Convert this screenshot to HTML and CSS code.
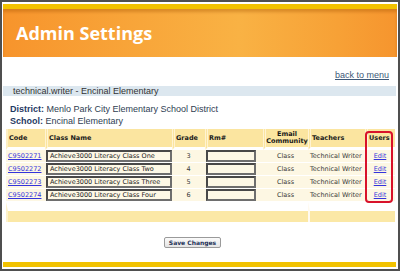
FILE: index.html
```html
<!DOCTYPE html>
<html lang="en">
  <head>
    <meta charset="UTF-8" />
    <title>Admin Settings</title>
    <link rel="stylesheet" href="styles.css">
  </head>
  <body>
    <div class="frame">
      <div class="banner">
        <h1 class="title">Admin Settings</h1>
      </div>

      <div class="toplinks">
        <a href="#" class="back-link">back to menu</a>
      </div>

      <div class="userbar">technical.writer - Encinal Elementary</div>

      <div class="school-info">
        <p><span class="label">District:</span> Menlo Park City Elementary School District</p>
        <p><span class="label">School:</span> Encinal Elementary</p>
      </div>

      <div class="table-wrap">
        <table class="classes">
          <colgroup>
            <col style="width: 39px" />
            <col style="width: 127px" />
            <col style="width: 33px" />
            <col style="width: 58px" />
            <col style="width: 45px" />
            <col style="width: 57px" />
            <col style="width: 30px" />
          </colgroup>
          <thead>
            <tr>
              <th class="first">Code</th>
              <th>Class Name</th>
              <th>Grade</th>
              <th>Rm#</th>
              <th class="center">Email<br />Community</th>
              <th>Teachers</th>
              <th>Users</th>
            </tr>
          </thead>
          <tbody>
            <tr>
              <td><a href="#" class="code-link">C9502271</a></td>
              <td><span class="field">Achieve3000 Literacy Class One</span></td>
              <td class="center">3</td>
              <td><span class="field room"></span></td>
              <td class="center">Class</td>
              <td>Technical Writer</td>
              <td class="center"><a href="#" class="edit-link">Edit</a></td>
            </tr>
            <tr>
              <td><a href="#" class="code-link">C9502272</a></td>
              <td><span class="field">Achieve3000 Literacy Class Two</span></td>
              <td class="center">4</td>
              <td><span class="field room"></span></td>
              <td class="center">Class</td>
              <td>Technical Writer</td>
              <td class="center"><a href="#" class="edit-link">Edit</a></td>
            </tr>
            <tr>
              <td><a href="#" class="code-link">C9502273</a></td>
              <td><span class="field">Achieve3000 Literacy Class Three</span></td>
              <td class="center">5</td>
              <td><span class="field room"></span></td>
              <td class="center">Class</td>
              <td>Technical Writer</td>
              <td class="center"><a href="#" class="edit-link">Edit</a></td>
            </tr>
            <tr>
              <td><a href="#" class="code-link">C9502274</a></td>
              <td><span class="field">Achieve3000 Literacy Class Four</span></td>
              <td class="center">6</td>
              <td><span class="field room"></span></td>
              <td class="center">Class</td>
              <td>Technical Writer</td>
              <td class="center"><a href="#" class="edit-link">Edit</a></td>
            </tr>
          </tbody>
          <tfoot>
            <tr>
              <td colspan="5" class="first"></td>
              <td colspan="2"></td>
            </tr>
          </tfoot>
        </table>
        <div class="callout"></div>
      </div>

      <div class="actions">
        <button class="save-btn">Save Changes</button>
      </div>

      <div class="bottom-bar"></div>
    </div>
  </body>
</html>
```

FILE: styles.css
```css
* {
  margin: 0;
  padding: 0;
  box-sizing: border-box;
}

body {
  font-family: "Liberation Sans", Arial, sans-serif;
  background: #ffffff;
  color: #333333;
}

.frame {
  width: 400px;
  height: 271px;
  border: 2px solid #4f4f4f;
  padding: 2px 1px 2px 1px;
  display: flex;
  flex-direction: column;
  background: #ffffff;
}

/* Orange banner */
.banner {
  height: 53px;
  border-top: 5px solid #f2c200;
  background: linear-gradient(
    90deg,
    #f7942c 0%,
    #f8a63a 35%,
    #f9b244 60%,
    #f7a136 85%,
    #f6952e 100%
  );
  box-shadow: inset 0 3px 3px rgba(160, 80, 0, 0.35);
  display: flex;
  align-items: center;
  padding-left: 13px;
}

.title {
  font-family: "Open Sans", sans-serif;
  font-weight: 700;
  font-size: 18px;
  color: #ffffff;
  line-height: 1;
}

.toplinks {
  height: 29px;
  padding: 13px 8px 0 0;
  text-align: right;
  font-size: 9px;
  line-height: 11px;
}

.back-link {
  color: #3d5878;
  text-decoration: underline;
}

.userbar {
  height: 10px;
  background: #dce7ef;
  padding-left: 10px;
  font-size: 9px;
  line-height: 10px;
  color: #333333;
  margin-right: 1px;
}

.school-info {
  margin-top: 7px;
  padding-left: 7px;
  font-size: 9px;
  line-height: 12px;
  color: #2e3d52;
}

.label {
  font-weight: 700;
  color: #1f3a64;
}

/* Class table */
.table-wrap {
  position: relative;
  margin: 2px 2px 0 3px;
}

.classes {
  width: 389px;
  table-layout: fixed;
  border-collapse: separate;
  border-spacing: 0;
  font-family: "DejaVu Sans", Verdana, sans-serif;
  font-size: 6.5px;
  color: #3a3a3a;
}

.classes th {
  height: 21px;
  background: #fbe5a0;
  border-left: 3px double #fff3d2;
  border-bottom: 3px solid #ffffff;
  text-align: left;
  font-weight: 700;
  color: #1a1a1a;
  line-height: 7px;
  padding: 0 0 0 1px;
  white-space: nowrap;
}

.classes th.first {
  border-left: 2px solid #fdefc4;
}

.classes td {
  height: 13px;
  background: #fdf7e3;
  border-bottom: 1px solid #ffffff;
  padding: 0 0 0 2px;
  white-space: nowrap;
  overflow: hidden;
}

.classes .center {
  text-align: center;
  padding-left: 0;
}

.classes tbody td:nth-child(2),
.classes tbody td:nth-child(4) {
  padding: 0 0 0 1px;
}

.code-link,
.edit-link {
  color: #3434dc;
  text-decoration: underline;
}

.field {
  display: block;
  width: 100%;
  height: 12px;
  border: 2px solid #484848;
  border-right-color: #6e6e6e;
  border-bottom-color: #6e6e6e;
  background: #fdf8e6;
  color: #222222;
  padding: 0 2px;
  line-height: 8px;
}

.field.room {
  width: 50px;
}

.classes tfoot td {
  height: 20px;
  background: #fbe8a6;
  border-top: 9px solid #ffffff;
  border-bottom: 0;
  border-left: 2px solid #fdf2cc;
}

.classes tfoot td + td {
  border-left: 2px solid #fffaf0;
}

.callout {
  position: absolute;
  left: 359px;
  top: 2px;
  width: 28px;
  height: 72px;
  border: 2px solid #d8122a;
  border-radius: 4px;
}

.actions {
  text-align: center;
  margin-top: 9px;
  padding-right: 15px;
}

.save-btn {
  width: 57px;
  height: 11px;
  font-family: "DejaVu Sans", Verdana, sans-serif;
  font-size: 6px;
  font-weight: 700;
  color: #1f3358;
  background: linear-gradient(#fbfbfb, #e4e4e4);
  border: 1px solid #9a9a9a;
  border-radius: 2px;
  line-height: 9px;
  cursor: pointer;
}

.bottom-bar {
  margin-top: auto;
  height: 5px;
  background: #f2c200;
  margin-right: 1px;
}
```
